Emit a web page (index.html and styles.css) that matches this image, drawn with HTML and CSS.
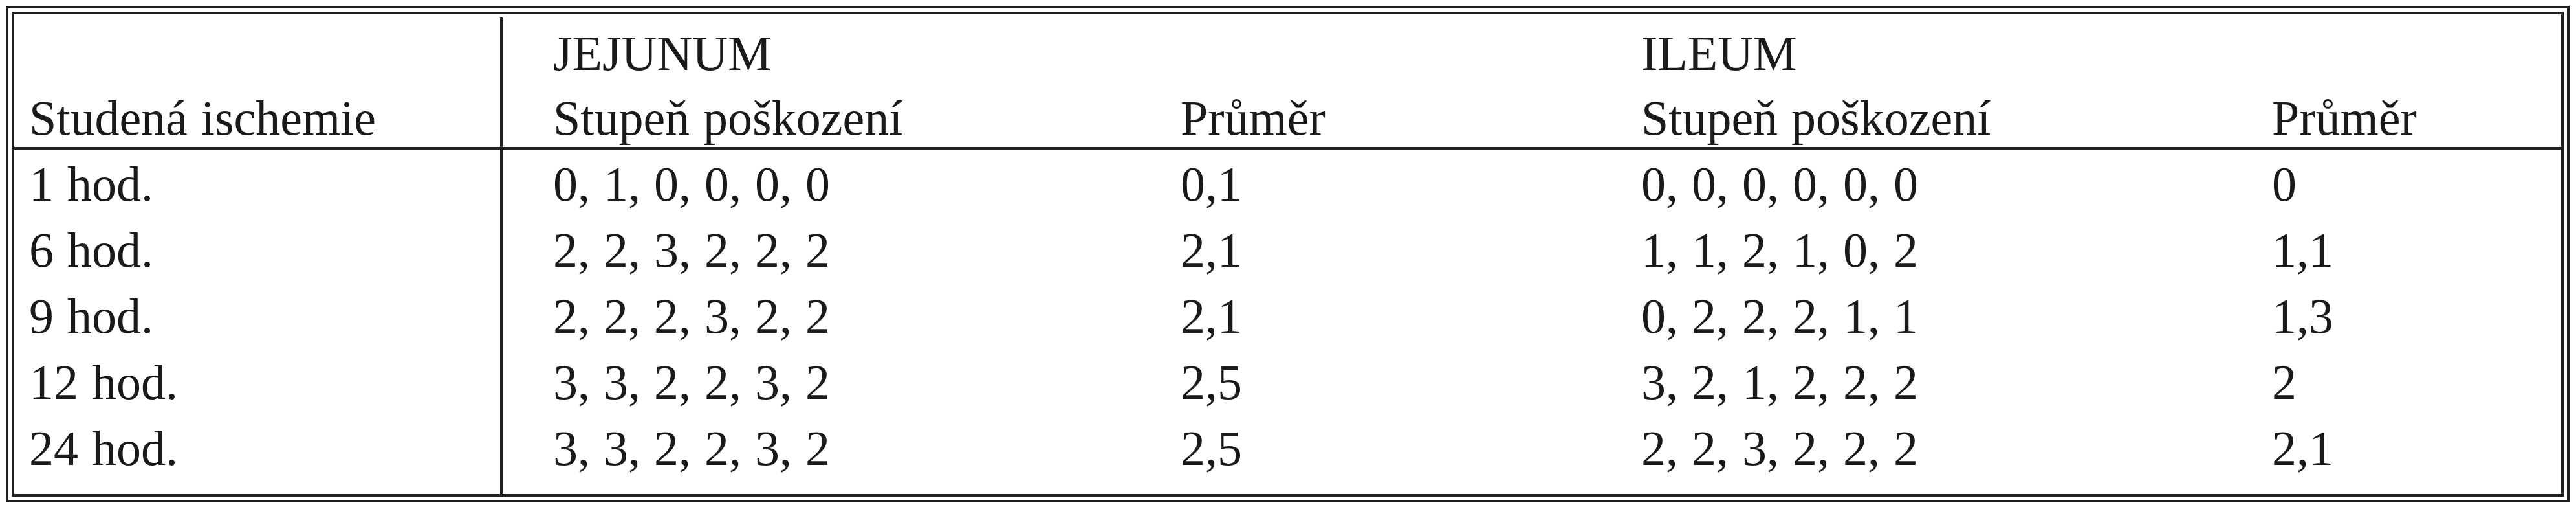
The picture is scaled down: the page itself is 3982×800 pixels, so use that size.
FILE: index.html
```html
<!DOCTYPE html>
<html lang="cs">
<head>
<meta charset="utf-8">
<title>Studená ischemie</title>
<link rel="stylesheet" href="styles.css">
</head>
<body>
<div class="frame">
  <div class="grid">
    <div class="row h1">
      <div class="c c1"></div>
      <div class="c c2">JEJUNUM</div>
      <div class="c c3"></div>
      <div class="c c4">ILEUM</div>
      <div class="c c5"></div>
    </div>
    <div class="row h2">
      <div class="c c1">Studená ischemie</div>
      <div class="c c2">Stupeň poškození</div>
      <div class="c c3">Průměr</div>
      <div class="c c4">Stupeň poškození</div>
      <div class="c c5">Průměr</div>
    </div>
    <div class="row d d1">
      <div class="c c1">1 hod.</div>
      <div class="c c2">0, 1, 0, 0, 0, 0</div>
      <div class="c c3">0,1</div>
      <div class="c c4">0, 0, 0, 0, 0, 0</div>
      <div class="c c5">0</div>
    </div>
    <div class="row d">
      <div class="c c1">6 hod.</div>
      <div class="c c2">2, 2, 3, 2, 2, 2</div>
      <div class="c c3">2,1</div>
      <div class="c c4">1, 1, 2, 1, 0, 2</div>
      <div class="c c5">1,1</div>
    </div>
    <div class="row d">
      <div class="c c1">9 hod.</div>
      <div class="c c2">2, 2, 2, 3, 2, 2</div>
      <div class="c c3">2,1</div>
      <div class="c c4">0, 2, 2, 2, 1, 1</div>
      <div class="c c5">1,3</div>
    </div>
    <div class="row d">
      <div class="c c1">12 hod.</div>
      <div class="c c2">3, 3, 2, 2, 3, 2</div>
      <div class="c c3">2,5</div>
      <div class="c c4">3, 2, 1, 2, 2, 2</div>
      <div class="c c5">2</div>
    </div>
    <div class="row d">
      <div class="c c1">24 hod.</div>
      <div class="c c2">3, 3, 2, 2, 3, 2</div>
      <div class="c c3">2,5</div>
      <div class="c c4">2, 2, 3, 2, 2, 2</div>
      <div class="c c5">2,1</div>
    </div>
  </div>
</div>
</body>
</html>
```

FILE: styles.css
```css
html, body {
  margin: 0;
  padding: 0;
  background: #ffffff;
}

.frame {
  margin: 9px;
  width: 3963px;
  height: 767px;
  box-sizing: border-box;
  border: 13px double #231f20;
  padding-top: 5px;
  background: #ffffff;
}

.grid {
  display: grid;
  grid-template-columns: 755px 1048px 712px 975px 1fr;
  grid-template-rows: 110px 94px 104px 102px 102px 102px 1fr;
  height: 100%;
  font-family: "Liberation Serif", "Times New Roman", serif;
  font-size: 76px;
  color: #1a1a1a;
  word-spacing: 2px;
}

.row {
  display: contents;
}

.c {
  box-sizing: border-box;
  white-space: nowrap;
  line-height: 102px;
}

.c1 {
  border-right: 4px solid #231f20;
  padding-left: 23px;
}

.c2 {
  padding-left: 78px;
}

.h1 .c {
  line-height: 110px;
}

.h2 .c {
  line-height: 90px;
  border-bottom: 4px solid #231f20;
}

.d1 .c {
  padding-top: 2px;
}
```
